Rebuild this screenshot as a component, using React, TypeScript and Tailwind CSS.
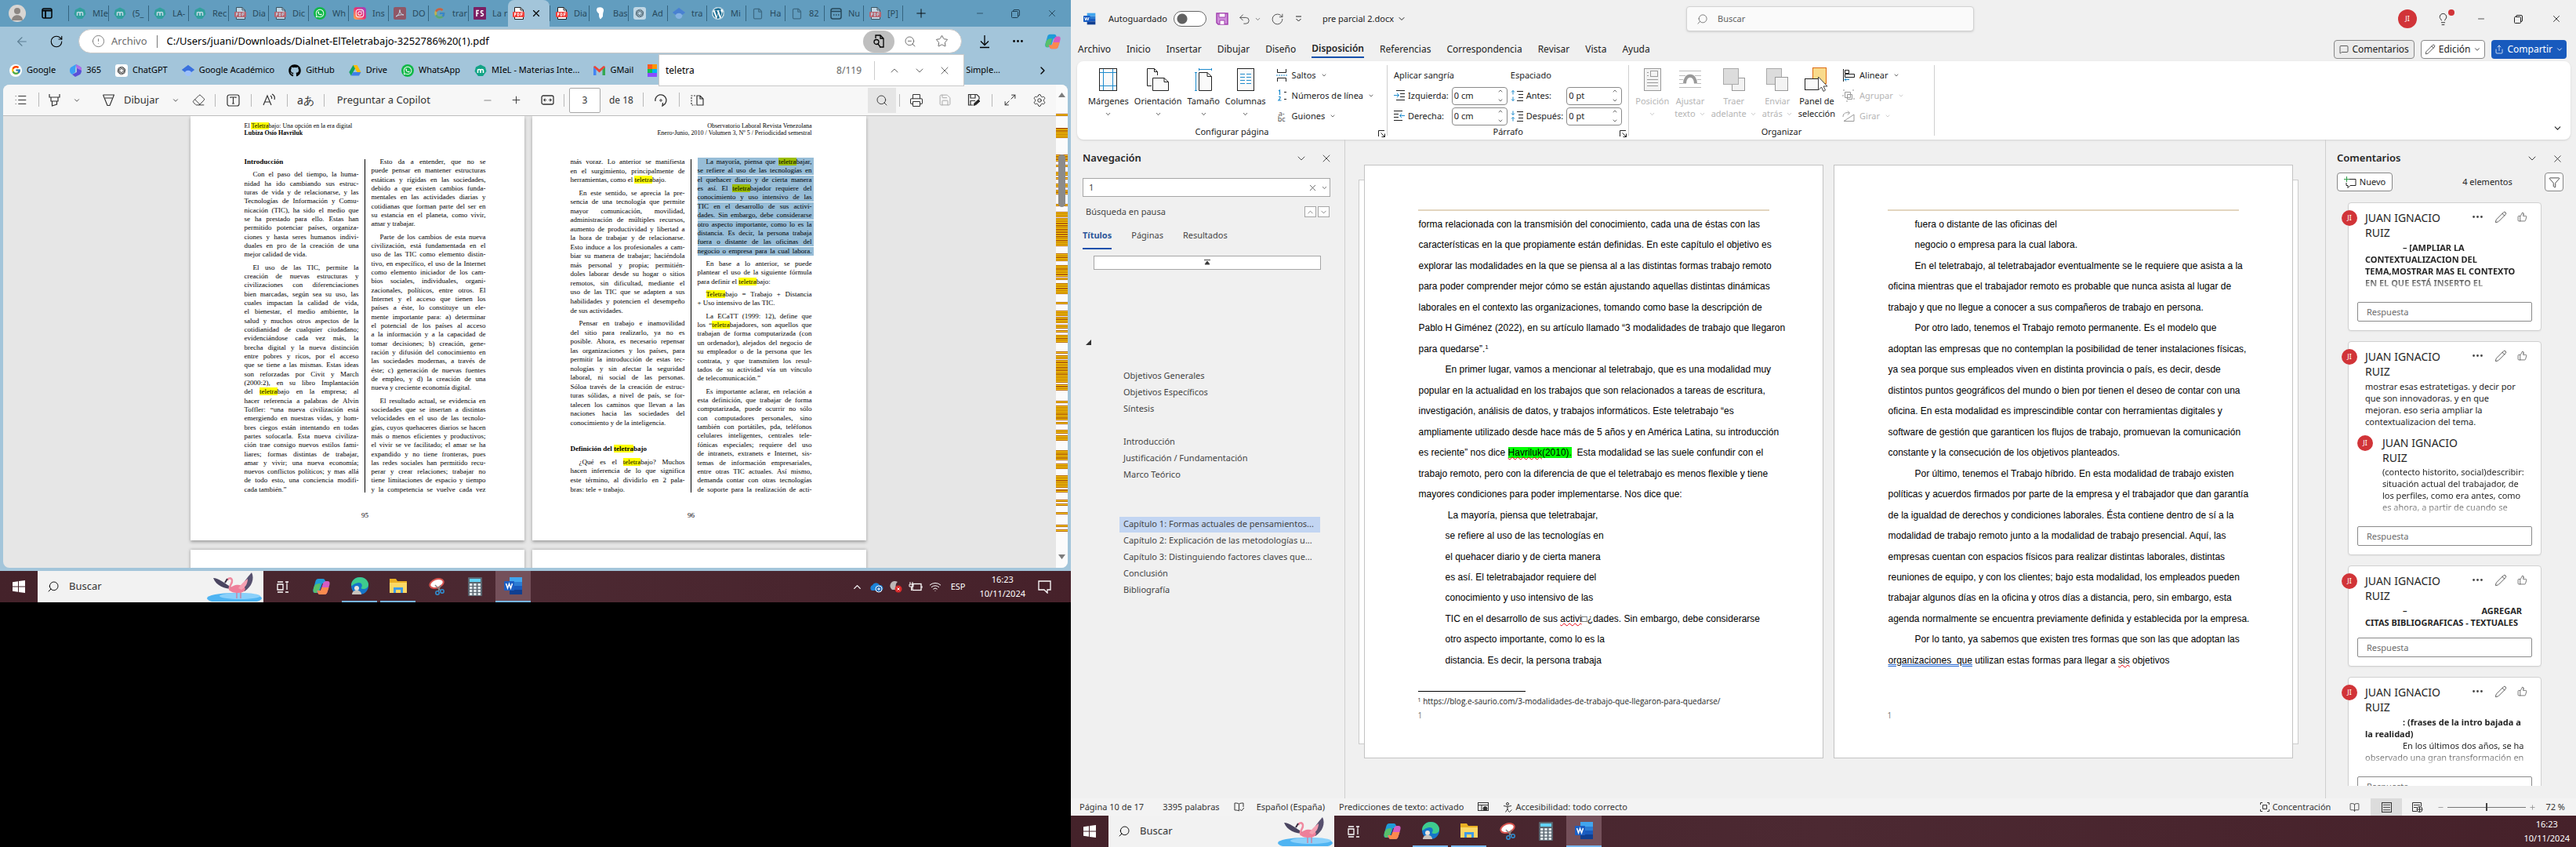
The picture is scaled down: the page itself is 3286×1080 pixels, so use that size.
import type { ReactNode } from 'react';
import {
  AlignJustify, ArrowLeft, BookOpen, ChevronDown, ChevronRight, ChevronUp, Download, Eraser, File, Filter, Info,
  Lightbulb, List, Maximize2, MessageSquare, Minus, MoreHorizontal, Pencil, Plus, Printer, RotateCw, Save, Search,
  Settings, Share, Star, ThumbsUp, Undo2, Wifi, X, ZoomOut,
} from 'lucide-react';
import { FcGoogle } from 'react-icons/fc';
import { FaGithub, FaInstagram, FaWhatsapp, FaWordpress } from 'react-icons/fa';

const ui = "font-['Noto_Sans',sans-serif]";

/* ---------- small drawings ---------- */

function Svg({ w = 16, h = 16, box, className = '', children }: { w?: number; h?: number; box?: string; className?: string; children: ReactNode }) {
  return (
    <svg width={w} height={h} viewBox={box ?? `0 0 ${w} ${h}`} fill="none" stroke="currentColor" className={`shrink-0 ${className}`} aria-hidden="true">
      {children}
    </svg>
  );
}

const Restore = ({ size = 11 }: { size?: number }) => (
  <Svg w={size} h={size} box="0 0 11 11">
    <rect x="0.5" y="2.5" width="8" height="8" rx="1" />
    <path d="M2.5 2.5V2a1.5 1.5 0 0 1 1.500-1.500H9A1.500 1.500 0 0 1 10.500 2v5A1.500 1.500 0 0 1 9 8.500" />
  </Svg>
);

const Miel = () => (
  <Svg w={16} h={16}>
    <path d="M8 0.500 14 3.500 15.500 9 11 15H5L0.500 9 2 3.500z" fill="#12a385" stroke="none" />
    <path d="M4.500 11V6.500M4.500 8c0-2 3.500-2 3.500 0v3M8 8c0-2 3.500-2 3.500 0v3" stroke="#fff" strokeWidth="1.600" />
  </Svg>
);
const Pdf = () => (
  <Svg w={15} h={16}>
    <path d="M2.500 0.500H10L13.500 4v11.500h-11z" fill="#fff" stroke="#222" />
    <path d="M10 0.500V4h3.500" stroke="#222" />
    <rect x="0" y="6" width="15" height="7" rx="1" fill="#f0413c" stroke="none" />
    <path d="M2.500 11.500v-4h1.500v2h-1.500M6.500 7.500v4c2.500 0 2.500-4 0-4M10.500 11.500v-4h2.500M10.500 9.500h2" stroke="#fff" strokeWidth="0.900" />
  </Svg>
);
const Acrobat = () => (
  <Svg w={16} h={16}>
    <rect width="16" height="16" rx="2" fill="#b0292c" stroke="none" />
    <path d="M3 12c3-1 5-5 5-8.500 0 4 2 6 5 6.500-4-0.500-6.500 0-10 2z" stroke="#fff" />
  </Svg>
);
const Fs = () => (
  <Svg w={16} h={16}>
    <rect width="16" height="16" rx="1" fill="#7b1f63" stroke="none" />
    <path d="M4 12V4.500h3M4 8h2.500M12.500 5C9 3.500 8.500 7.500 11 8s2 4-2 3" stroke="#fff" strokeWidth="1.500" />
  </Svg>
);
const Gpt = () => (
  <Svg w={16} h={16}>
    <rect width="16" height="16" rx="3" fill="#fff" stroke="none" />
    {[0, 60, 120, 180, 240, 300].map((a) => (
      <path key={a} d="M6 8V4.500L8.500 3l2.500 1.500V7" stroke="#333" strokeWidth="0.800" transform={`rotate(${a} 8 8)`} />
    ))}
  </Svg>
);
const Scholar = () => (
  <Svg w={16} h={16}>
    <path d="M8 1 16 7l-8 6-8-6z" fill="#4a84ee" stroke="none" />
    <circle cx="8" cy="10.500" r="4.500" fill="#9cc0fa" stroke="none" />
    <path d="M8 1 0 7l4 3c1.500-3 6.500-3 8 0l4-3z" fill="#3a70dd" stroke="none" />
  </Svg>
);
const Drive = () => (
  <Svg w={16} h={15} box="0 0 16 15">
    <path d="M5.500 1h5l5 9h-5z" fill="#fbbc05" stroke="none" />
    <path d="M5.500 1 8 5.500 2.800 14.500 0.300 10z" fill="#10a35a" stroke="none" />
    <path d="M5.400 10h10.100l-2.500 4.500H2.800z" fill="#3f7fe8" stroke="none" />
  </Svg>
);
const Gmail = () => (
  <Svg w={15} h={12}>
    <path d="M0 12V1.500L3.500 4.500V12z" fill="#4285f4" stroke="none" />
    <path d="M15 12V1.500L11.500 4.500V12z" fill="#34a853" stroke="none" />
    <path d="M0 1.500C1-0.500 3 0.500 3.500 1.200L7.500 4.500l4-3.300C12 0.500 14-0.500 15 1.500L7.500 8.500z" fill="#ea4335" stroke="none" />
  </Svg>
);
const Copilot = ({ size = 20 }: { size?: number }) => (
  <Svg w={size} h={size} box="0 0 24 24">
    <path d="M8 2h6c2 0 2.500 1.500 3 3l1 3h-5l-3 9c-0.800 2-2 3-4 3H4c-3 0-3-3-2-6L4.500 5C5 3 6.500 2 8 2z" fill="#1f9bd8" stroke="none" />
    <path d="M2 14c1-4 3-6 9-6l-2 9c-0.800 2-2 3-4 3-3 0-4-2-3-6z" fill="#57c06a" stroke="none" />
    <path d="M16 22h-6c-2 0-2.500-1.500-3-3l-1-2h5l3-9c0.800-2 2-3 4-3h2c3 0 3 3 2 6l-2.500 8c-0.500 2-2 3-3.500 3z" fill="#d45cc4" stroke="none" />
    <path d="M7 17h4l1.500-4h9l-2 6c-0.500 2-2 3-3.500 3h-6c-2 0-2.500-1.500-3-5z" fill="#fb8a4e" stroke="none" />
  </Svg>
);
const M365 = () => (
  <Svg w={15} h={16}>
    <path d="M8 0 2 3.500C0.500 4.500 0 6 0 8s1 4 3 5l4-3V6z" fill="#3aa0f5" stroke="none" />
    <path d="M8 0l6 3.500c1 1 1 2 1 4.500s-1 4-2 5l-6 3-4-3 6-3V5z" fill="#5a4fd8" stroke="none" />
    <path d="M8 0l6 3.500c1 1 1 2 1 4.500L9 5z" fill="#b46ee8" stroke="none" />
  </Svg>
);
const WordLogo = ({ size = 16 }: { size?: number }) => (
  <Svg w={size} h={size} box="0 0 24 24">
    <path d="M7 1h16v6H7z" fill="#41a5ee" stroke="none" />
    <path d="M7 7h16v5H7z" fill="#2b7cd3" stroke="none" />
    <path d="M7 12h16v5H7z" fill="#185abd" stroke="none" />
    <path d="M7 17h16v6H7z" fill="#103f91" stroke="none" />
    <rect x="0" y="6" width="13" height="12" rx="1" fill="#1b5fc4" stroke="none" />
    <path d="M2.500 9 4.500 15 6.500 9.500 8.500 15 10.500 9" stroke="#fff" strokeWidth="1.500" />
  </Svg>
);
const Whats = () => (
  <span className="grid size-4 shrink-0 place-items-center rounded-full bg-[#12b849] text-white"><FaWhatsapp size={12} /></span>
);
const Insta = () => (
  <span className="grid size-4 shrink-0 place-items-center rounded bg-linear-to-tr from-[#fdb13c] via-[#e8306f] to-[#9b36c8] text-white"><FaInstagram size={12} /></span>
);

/* ---------- browser window ---------- */

type Tab = { icon: ReactNode; text: string; dim?: boolean };
const tabsBefore: Tab[] = [
  { icon: <Miel />, text: 'MIe', dim: true }, { icon: <Miel />, text: '(5_', dim: true }, { icon: <Miel />, text: 'LA-', dim: true },
  { icon: <Miel />, text: 'Rec', dim: true }, { icon: <Pdf />, text: 'Dia', dim: true }, { icon: <Pdf />, text: 'Dic', dim: true },
  { icon: <Whats />, text: 'Wh' }, { icon: <Insta />, text: 'Ins' }, { icon: <Acrobat />, text: 'DO', dim: true },
  { icon: <FcGoogle size={16} className="shrink-0" />, text: 'trar', dim: true }, { icon: <Fs />, text: 'La r' },
];
const tabsAfter: Tab[] = [
  { icon: <Pdf />, text: 'Dia' },
  { icon: <Svg w={12} h={16}><path d="M2 1c4-2 9 0 8 4-1 3-1 4-1 7l-3 3.500c-2-2-2-4-2-7C1 6 0 3 2 1z" fill="#fff" stroke="none" /></Svg>, text: 'Bas' },
  { icon: <Gpt />, text: 'Ad', dim: true }, { icon: <Scholar />, text: 'tra', dim: true },
  { icon: <FaWordpress size={16} className="shrink-0 rounded-full bg-white text-[#1d6e93]" />, text: 'Mi' },
  { icon: <File size={15} className="shrink-0" />, text: 'Ha', dim: true }, { icon: <File size={15} className="shrink-0" />, text: '82', dim: true },
  { icon: <Svg w={15} h={15}><rect x="1" y="1" width="13" height="13" rx="2.500" strokeWidth="1.500" /><path d="M1 4.500h13M4 9h1.500M7 9h1.500M10 9h1.500" strokeWidth="1.500" /></Svg>, text: 'Nu' },
  { icon: <Pdf />, text: '[P]', dim: true },
];

function TabButton({ tab, narrow }: { tab: Tab; narrow?: boolean }) {
  return (
    <button className={`flex h-5 items-center gap-2 overflow-hidden border-l border-[#35647f] pl-1.5 text-[11px] whitespace-nowrap text-[#27495c] ${narrow ? 'w-[50px]' : 'w-[51px]'}`}>
      <span className={`flex w-4 shrink-0 justify-center ${tab.dim ? 'opacity-60' : ''}`}>{tab.icon}</span>
      {tab.text}
    </button>
  );
}

function TabStrip() {
  return (
    <div className="flex h-[34px] shrink-0 items-center bg-[#629dbf]">
      <button aria-label="Perfil" className="ml-[11px] grid size-[22px] place-items-center overflow-hidden rounded-full bg-[#d8d5d2]">
        <Svg w={22} h={22}><circle cx="11" cy="8" r="4" fill="#8b8682" stroke="none" /><path d="M4 20c0-9 14-9 14 0z" fill="#8b8682" stroke="none" /></Svg>
      </button>
      <button aria-label="Áreas de trabajo" className="mr-5 ml-5 text-black">
        <Svg w={14} h={14}><rect x="1" y="1" width="12" height="12" rx="2" strokeWidth="1.500" /><path d="M1 3.500h12M5 4v9" strokeWidth="2" /></Svg>
      </button>
      {tabsBefore.map((t, i) => <TabButton key={i} tab={t} />)}
      <button aria-label="Pestaña activa" className="flex h-full w-[53px] items-center justify-between self-end rounded-t-lg bg-[#a3c5da] pr-2.5 pl-1.5">
        <Pdf /><X size={14} />
      </button>
      {tabsAfter.map((t, i) => <TabButton key={i} tab={t} narrow />)}
      <div className="h-5 border-l border-[#35647f]" />
      <button aria-label="Nueva pestaña" className="ml-3.5"><Plus size={18} strokeWidth={1.2} /></button>
      <div className="mr-[17px] ml-auto flex items-center gap-[34px] text-[#1f3f52]">
        <button aria-label="Minimizar"><Minus size={12} strokeWidth={1.5} /></button>
        <button aria-label="Restaurar"><Restore /></button>
        <button aria-label="Cerrar"><X size={14} strokeWidth={1.5} /></button>
      </div>
    </div>
  );
}

function AddressBar() {
  return (
    <div className="flex h-[37px] shrink-0 items-center">
      <button aria-label="Atrás" className="ml-[19px] text-[#5d7f93]"><ArrowLeft size={18} strokeWidth={1.5} /></button>
      <button aria-label="Actualizar" className="mr-[19px] ml-[26px]"><RotateCw size={18} strokeWidth={1.5} /></button>
      <div className="flex h-[31px] flex-1 items-center rounded-full border border-[#c9c9c9] bg-white pl-4 text-[13px]">
        <Info size={17} strokeWidth={1.2} className="rotate-180 text-[#6b6b6b]" />
        <span className="ml-2 text-[#6b6b6b]">Archivo</span>
        <span className="mx-3 h-4 border-l border-[#777]" />
        <input aria-label="Dirección" readOnly className="min-w-0 flex-1 outline-none" value="C:/Users/juani/Downloads/Dialnet-ElTeletrabajo-3252786%20(1).pdf" />
        <button aria-label="Buscar en la página" className="grid h-7 w-10 place-items-center rounded-full bg-[#bfbfbf]">
          <Svg w={16} h={17}><path d="M4 5V1h6l4 4v11H9M10 1v4h4" strokeWidth="1.300" /><circle cx="5" cy="9.500" r="3" strokeWidth="1.300" /><path d="m7 12 3 4" strokeWidth="1.300" /></Svg>
        </button>
        <button aria-label="Alejar" className="ml-3 text-[#666]"><ZoomOut size={16} strokeWidth={1.4} /></button>
        <button aria-label="Favoritos" className="mr-4 ml-6 text-[#666]"><Star size={17} strokeWidth={1.4} /></button>
      </div>
      <div className="mr-3 ml-5 flex items-center gap-[25px]">
        <button aria-label="Descargas"><Svg w={18} h={18}><path d="M9 1v12M4 8.500l5 5 5-5M3 16.500h12" strokeWidth="1.300" /></Svg></button>
        <button aria-label="Más"><MoreHorizontal size={17} /></button>
        <button aria-label="Copilot"><Copilot size={22} /></button>
      </div>
    </div>
  );
}

const marks: [ReactNode, string][] = [
  [<span key="g" className="grid size-4 place-items-center rounded-full bg-white"><FcGoogle size={13} /></span>, 'Google'], [<M365 key="m" />, '365'], [<Gpt key="c" />, 'ChatGPT'],
  [<Scholar key="s" />, 'Google Académico'], [<FaGithub key="h" size={16} />, 'GitHub'], [<Drive key="d" />, 'Drive'],
  [<Whats key="w" />, 'WhatsApp'], [<Miel key="mi" />, 'MIeL - Materias Inte...'], [<Gmail key="gm" />, 'GMail'],
];

function Bookmarks() {
  return (
    <div className="relative flex h-[37px] shrink-0 items-center pl-3 text-[11px] whitespace-nowrap">
      <nav aria-label="Marcadores" className="flex items-center gap-[18px]">
        {marks.map(([icon, text]) => (
          <a key={text} href="#" className="flex items-center gap-1.5">{icon}{text}</a>
        ))}
        <Svg w={12} h={16}>
          <path d="M0 0h6v6H0z" fill="#ff5a1f" stroke="none" /><path d="M6 0h6v6H6z" fill="#ff9500" stroke="none" />
          <path d="M0 6h6v5H0z" fill="#12c24a" stroke="none" /><path d="M6 6h6v5H6z" fill="#00b4f0" stroke="none" />
          <path d="M0 11h12v5H0z" fill="#8a4cff" stroke="none" />
        </Svg>
      </nav>
      <a href="#" className="mr-[90px] ml-auto">Simple...</a>
      <button aria-label="Más marcadores" className="absolute right-7"><ChevronRight size={16} /></button>
      <div role="search" className="absolute -top-0.5 right-[136px] z-10 flex h-[41px] w-[390px] items-center border border-[#c8c8c8] bg-white px-2 text-xs">
        <input aria-label="Buscar" readOnly value="teletra" className="min-w-0 flex-1 outline-none" />
        <span className="text-[#666]">8/119</span>
        <span className="mr-[17px] ml-4 h-6 border-l border-[#ccc]" />
        <div className="mr-2 flex gap-4 text-[#555]">
          <button aria-label="Anterior"><ChevronUp size={16} strokeWidth={1.3} /></button>
          <button aria-label="Siguiente"><ChevronDown size={16} strokeWidth={1.3} /></button>
          <button aria-label="Cerrar búsqueda"><X size={16} strokeWidth={1.3} /></button>
        </div>
      </div>
    </div>
  );
}

const Sep = () => <span className="h-4 border-l border-[#b9b9b9]" />;

function PdfToolbar() {
  return (
    <div className="flex h-10 shrink-0 items-center border-b border-[#bdbdbd] bg-[#f7f7f7] text-[13px] text-[#333]">
      <div className="flex items-center pl-3.5">
        <button aria-label="Contenido"><List size={17} strokeWidth={1.4} /></button>
        <span className="ml-3.5"><Sep /></span>
        <button aria-label="Resaltar" className="ml-3 flex items-center gap-4">
          <Svg w={15} h={17}><path d="M1 1v4h13V1M3 5v5h9V5M4.500 10v6l6-2v-4" strokeWidth="1.200" /></Svg><ChevronDown size={10} />
        </button>
        <button className="ml-7 flex items-center gap-3"><Svg w={15} h={16}><path d="M0.500 1h14L9 14.500H6L0.500 1M3 5h9" strokeWidth="1.200" /></Svg>Dibujar<ChevronDown size={10} className="ml-1" /></button>
        <button aria-label="Borrar" className="mr-3 ml-4"><Eraser size={17} strokeWidth={1.3} /></button>
        <Sep />
        <button aria-label="Agregar texto" className="mx-3.5"><Svg w={17} h={16}><rect x="1" y="1" width="15" height="14" rx="2.500" strokeWidth="1.200" /><path d="M5 5V4h7v1M8.500 4v8M7 12h3" strokeWidth="1.200" /></Svg></button>
        <Sep />
        <button aria-label="Leer en voz alta" className="mx-3.5"><Svg w={17} h={17}><path d="m1 15 5-12 5 12M3 11h6M10 3c1.500 1 2 2 1.500 4M12 1c3 1.500 4 4 3 7" strokeWidth="1.200" /></Svg></button>
        <Sep />
        <button aria-label="Traducir" className="mx-3 text-[14px] leading-none">aあ</button>
        <Sep />
        <button className="ml-4">Preguntar a Copilot</button>
      </div>
      <div className="mr-auto ml-[66px] flex items-center">
        <button aria-label="Alejar" className="text-[#888]"><Minus size={14} /></button>
        <button aria-label="Acercar" className="ml-[22px]"><Plus size={15} strokeWidth={1.5} /></button>
        <button aria-label="Ajustar al ancho" className="mr-3 ml-6"><Svg w={17} h={13}><rect x="1" y="1" width="15" height="11" rx="2" strokeWidth="1.300" /><path d="M4 6.500h3M10 6.500h3M5.500 4.500l-2 2 2 2M11.500 4.500l2 2-2 2" /></Svg></button>
        <Sep />
        <input aria-label="Página" readOnly value="3" className="mr-[11px] ml-1.5 h-8 w-10 rounded-xs border border-[#a9a9a9] bg-white text-center text-xs" />
        <span className="text-xs">de 18</span>
        <span className="mr-3.5 ml-3"><Sep /></span>
        <button aria-label="Girar"><Svg w={17} h={16}><path d="M1 9a7 7 0 1 1 9 5.500M14 12l-4 3 0.500-4" strokeWidth="1.300" /><circle cx="8" cy="8" r="1.200" /></Svg></button>
        <span className="mr-3.5 ml-3.5"><Sep /></span>
        <button aria-label="Vista de página"><Svg w={17} h={14}><path d="M6 1H1v12h5" strokeDasharray="2 1.500" strokeWidth="1.200" /><path d="M8 1h4l4 4v8H8zM12 1v4h4" strokeWidth="1.200" /></Svg></button>
      </div>
      <div className="flex items-center pr-3">
        <button aria-label="Buscar" className="mr-1 grid h-8 w-9 place-items-center bg-[#e5e5e5]"><Search size={16} strokeWidth={1.4} /></button>
        <Sep />
        <button aria-label="Imprimir" className="ml-3"><Printer size={18} strokeWidth={1.4} /></button>
        <button aria-label="Guardar" className="ml-[19px] text-[#aaa]"><Save size={17} strokeWidth={1.4} /></button>
        <button aria-label="Guardar como" className="mr-3.5 ml-5"><Svg w={17} h={17}><path d="M7 15H1.500V1.500H12L15 4.500V8M4 1.500V6h6V1.500M4 15V9.500h6" strokeWidth="1.200" /><path d="m8 15.500 1-3 5-4.500 2 2-5 4.500z" fill="#222" /></Svg></button>
        <Sep />
        <button aria-label="Pantalla completa" className="ml-3.5"><Maximize2 size={17} strokeWidth={1.4} /></button>
        <button aria-label="Configuración" className="ml-5"><Settings size={18} strokeWidth={1.3} /></button>
      </div>
    </div>
  );
}

/* In these columns: "# " marks a heading, "> " the first line of a paragraph, a trailing "|" a line that is not stretched. */
const p95a = `# Introducción|
> Con el paso del tiempo, la huma-
nidad ha ido cambiando sus estruc-
turas de vida y de relacionarse, y las
Tecnologías de Información y Comu-
nicación (TIC), ha sido el medio que
se ha prestado para ello. Estas han
permitido potenciar países, organiza-
ciones y hasta seres humanos indivi-
duales en pro de la creación de una
mejor calidad de vida.|
> El uso de las TIC, permite la
creación de nuevas estructuras y
civilizaciones con diferenciaciones
bien marcadas, según sea su uso, las
cuales impactan la calidad de vida,
el bienestar, el medio ambiente, la
salud y muchos otros aspectos de la
cotidianidad de cualquier ciudadano;
evidenciándose cada vez más, la
brecha digital y la nueva distinción
entre pobres y ricos, por el acceso
que se tiene a las mismas. Estas ideas
son reforzadas por Civit y March
(2000:2), en su libro Implantación
del teletrabajo en la empresa; al
hacer referencia a palabras de Alvin
Toffler: “una nueva civilización está
emergiendo en nuestras vidas, y hom-
bres ciegos están intentando en todas
partes sofocarla. Esta nueva civiliza-
ción trae consigo nuevos estilos fami-
liares; formas distintas de trabajar,
amar y vivir; una nueva economía;
nuevos conflictos políticos; y mas allá
de todo esto, una conciencia modifi-
cada también.”|`;
const p95b = `> Esto da a entender, que no se
puede pensar en mantener estructuras
estáticas y rígidas en las sociedades,
debido a que existen cambios funda-
mentales en las actividades diarias y
cotidianas que forman parte del ser en
su estancia en el planeta, como vivir,
amar y trabajar.|
> Parte de los cambios de esta nueva
civilización, está fundamentada en el
uso de las TIC como elemento distin-
tivo, en específico, el uso de la Internet
como elemento iniciador de los cam-
bios sociales, individuales, organi-
zacionales, políticos, entre otros. El
Internet y el acceso que tienen los
países a éste, lo constituye un ele-
mente importante para: a) determinar
el potencial de los países al acceso
a la información y a la capacidad de
tomar decisiones; b) creación, gene-
ración y difusión del conocimiento en
las sociedades modernas, a través de
éste; c) generación de nuevas fuentes
de empleo, y d) la creación de una
nueva y creciente economía digital.|
> El resultado actual, se evidencia en
sociedades que se insertan a distintas
velocidades en el uso de las tecnolo-
gías, cuyos quehaceres diarios se hacen
más o menos eficientes y productivos;
el vivir se ve facilitado; el amar se ha
expandido y no tiene fronteras, pues
las redes sociales han permitido recu-
perar y crear relaciones; trabajar no
tiene limitaciones de espacio y tiempo
y la competencia se vuelve cada vez`;
const p96a = `más voraz. Lo anterior se manifiesta
en el surgimiento, principalmente de
herramientas, como el teletrabajo.|
> En este sentido, se aprecia la pre-
sencia de una tecnología que permite
mayor comunicación, movilidad,
administración de múltiples recursos,
aumento de productividad y libertad a
la hora de trabajar y de relacionarse.
Esto induce a los profesionales a cam-
biar su manera de trabajar; haciéndola
más personal y propia; permitién-
doles laborar desde su hogar o sitios
remotos, sin dificultad, mediante el
uso de las TIC que se adapten a sus
habilidades y potencien el desempeño
de sus actividades.|
> Pensar en trabajo e inamovilidad
del sitio para realizarlo, ya no es
posible. Ahora, es necesario repensar
las organizaciones y los países, para
permitir la introducción de estas tec-
nologías y sin afectar la seguridad
laboral, ni social de las personas.
Sóloa través de la creación de estruc-
turas sólidas, a nivel de país, se for-
talecen los caminos que llevan a las
naciones hacia las sociedades del
conocimiento y de la inteligencia.|
# Definición del teletrabajo|
> ¿Qué es el teletrabajo? Muchos
hacen inferencia de lo que significa
este término, al dividirlo en 2 pala-
bras: tele + trabajo.|`;
const p96b = `> *La mayoría, piensa que teletrabajar,
*se refiere al uso de las tecnologías en
*el quehacer diario y de cierta manera
*es así. El teletrabajador requiere del
*conocimiento y uso intensivo de las
*TIC en el desarrollo de sus activi-
*dades. Sin embargo, debe considerarse
*otro aspecto importante, como lo es la
*distancia. Es decir, la persona trabaja
*fuera o distante de las oficinas del
*negocio o empresa para la cual labora.
> En base a lo anterior, se puede
plantear el uso de la siguiente fórmula
para definir el teletrabajo:|
> Teletrabajo = Trabajo + Distancia
+ Uso intensivo de las TIC.|
> La ECaTT (1999: 12), define que
los “teletrabajadores, son aquellos que
trabajan de forma computarizada (con
un ordenador), alejados del negocio de
su empleador o de la persona que les
contrata, y que transmiten los resul-
tados de su actividad vía un vínculo
de telecomunicación.”|
> Es importante aclarar, en relación a
esta definición, que trabajar de forma
computarizada, puede ocurrir no sólo
con computadores personales, sino
también con portátiles, pda, teléfonos
celulares inteligentes, centrales tele-
fónicas especiales; requiere del uso
de intranets, extranets e Internet, sis-
temas de información empresariales,
entre otras TIC actuales. Así mismo,
demanda contar con otras tecnologías
de soporte para la realización de acti-`;

function Found({ text, dark }: { text: string; dark?: boolean }) {
  return (
    <>
      {text.split(/(teletra)/i).map((part, i) =>
        i % 2 ? <mark key={i} className={`text-inherit ${dark ? 'bg-[#9bbd00]' : 'bg-[#ffff00]'}`}>{part}</mark> : part)}
    </>
  );
}

function Column({ text }: { text: string }) {
  return (
    <div className="flex h-[429px] w-[146px] flex-col justify-between text-[9px] leading-[11px] whitespace-nowrap text-black">
      {text.split('\n').map((raw, i) => {
        const heading = raw.startsWith('# ');
        const first = raw.startsWith('> ');
        const ragged = raw.endsWith('|');
        let t = raw.replace(/^[#>] /, '').replace(/\|$/, '');
        const selected = t.startsWith('*');
        if (selected) t = t.slice(1);
        return (
          <div key={i} className={`${heading ? 'font-bold' : ''} ${heading && i ? 'mt-[22px]' : ''} ${first && i ? 'mt-[5px]' : ''} ${selected ? '-mr-0.5 bg-[#97bdd7] pr-0.5' : ''}`}>
            <div className={`${first ? 'pl-[11px]' : ''} ${ragged ? '' : '[text-align-last:justify]'}`}><Found text={t} dark={selected} /></div>
          </div>
        );
      })}
    </div>
  );
}

function PdfPage({ left, right, number, children, reverse }: { left: string; right: string; number: string; children: ReactNode; reverse?: boolean }) {
  return (
    <article className={`h-[541px] w-[426px] bg-white pt-2 shadow-[0_2px_4px_#0005] ${reverse ? 'pr-[69px] pl-[49px]' : 'pr-[49px] pl-[69px]'}`}>
      <header className={`h-[45px] text-[8px] leading-[9px] ${reverse ? 'text-right' : ''}`}>{children}</header>
      <div className="flex justify-between">
        <Column text={left} />
        <span className="my-0.5 border-l border-black" />
        <Column text={right} />
      </div>
      <footer className="mt-[21px] text-center text-[9px] leading-3">{number}</footer>
    </article>
  );
}

const hits = [18,66,71,77,83,89,95,163,171,178,200,225,230,243,266,271,288,296,340,366,372,378,388,395,401,410,418,424,432,440,447,456,463,470,476,482,515,522,528,535,556,562,570,576,582,592,601,622,628,634,640,646,652,688,719,725,732,742,750,757,770,775,790,806,812,820,826,865,880,886,897,903,909,915,925,933,939,945,951,958,964,970,983,992,998,1042,1057,1063,1070,1076,1082,1088,1094,1104,1118,1145,1150,1165,1171,1177,1218,1224,1232,1238,1246,1266,1272,1278,1307,1313,1320,1326,1332,1338,1345,1358,1362,1395,1409,1440,1485,1502];

function PdfView() {
  return (
    <section aria-label="Documento PDF" className="mx-1 mb-1 flex min-h-0 flex-1 overflow-hidden rounded-lg bg-[#e6e6e6]">
      <div className="flex min-w-0 flex-1 flex-col">
        <PdfToolbar />
        <div className="grid min-h-0 flex-1 grid-cols-[426px_426px] content-start justify-center gap-x-2.5 gap-y-3 overflow-hidden pr-1 font-['Liberation_Serif',serif]">
          <PdfPage left={p95a} right={p95b} number="95">
            <Found text="El Teletrabajo: Una opción en la era digital" /><br /><b>Lubiza Osío Havriluk</b>
          </PdfPage>
          <PdfPage left={p96a} right={p96b} number="96" reverse>
            Observatorio Laboral Revista Venezolana<br />Enero-Junio, 2010 / Volumen 3, Nº 5 / Periodicidad semestral
          </PdfPage>
          <div className="h-10 bg-white shadow-[0_0_4px_#0005]" />
          <div className="h-10 bg-white shadow-[0_0_4px_#0005]" />
        </div>
      </div>
      <div className="w-[15px] bg-[#fbfbfb]">
        <svg width="15" height="616" className="block" aria-hidden="true">
          {hits.map((h, i) => (
            <g key={i}>
              <rect x="0" y={Math.round(h / 2.8) + 31} width="15" height="3" fill="#b5650a" />
              <rect x="0" y={Math.round(h / 2.8) + 32} width="15" height="1" fill="#ffd800" />
            </g>
          ))}
          <path d="M3 16l4.500-6 4.500 6zM3 599l4.500 6 4.500-6z" fill="#7d7d7d" />
          <rect x="3" y="89" width="9" height="67" rx="4.500" fill="#8b8b8b" />
        </svg>
      </div>
    </section>
  );
}

/* ---------- taskbar ---------- */

const Flamingo = () => (
  <Svg w={72} h={38}>
    <ellipse cx="35" cy="34" rx="35" ry="7" fill="#4fb4f2" stroke="none" />
    <ellipse cx="42" cy="31" rx="26" ry="4" fill="#8ad0fa" stroke="none" />
    <path d="M38 22v12M43 22v12" stroke="#e2607c" />
    <path d="M8 8c6 0 14 6 26 14-12 0-22-4-26-14z" fill="#4a4560" stroke="none" />
    <path d="M42 22c4-8 9-14 15-21 4 8 0 18-9 24z" fill="#57506e" stroke="none" />
    <path d="M30 24c-4-5 3-8 2-13-1-4-5-3-6 0" stroke="#f08aa0" strokeWidth="2.500" />
    <path d="m26 9-3 5" stroke="#3b3042" strokeWidth="2" />
    <path d="M29 22c3-5 12-7 18-3 4 3 1 8-7 8-6 0-11-1-11-5z" fill="#ee7f9a" stroke="none" />
    <path d="M40 21c3-5 8-9 12-12 0 6-3 11-8 14z" fill="#f4a0b2" stroke="none" />
  </Svg>
);

function TaskApp({ label, children, open, active }: { label: string; children: ReactNode; open?: boolean; active?: boolean }) {
  return (
    <button aria-label={label} className="h-full w-[49px] px-0.5">
      <span className={`grid h-full place-items-center ${open ? 'border-b-2 border-[#78b6ee]' : ''} ${active ? 'bg-[#74505a]' : ''}`}>{children}</span>
    </button>
  );
}

function Taskbar({ tray }: { tray?: boolean }) {
  return (
    <footer className={`flex h-10 shrink-0 items-center bg-linear-to-r from-[#44222a] via-[#4c2932] to-[#46212a] text-white ${ui}`}>
      <button aria-label="Inicio" className="grid h-full w-12 place-items-center">
        <Svg w={16} h={16}><path d="M0 2.200 7 1.200v6.300H0zM8 1l8-1v7.500H8zM0 8.500h7v6.300l-7-1zM8 8.500h8V16l-8-1z" fill="#fff" stroke="none" /></Svg>
      </button>
      <label className="flex h-full w-72 items-center bg-[#f2f2f2] pl-3 text-black">
        <Search size={16} strokeWidth={1.4} className="-scale-x-100" />
        <input aria-label="Buscar" placeholder="Buscar" className="ml-3 w-0 flex-1 text-[13px] outline-none placeholder:text-[#333]" />
        <Flamingo />
      </label>
      <button aria-label="Vista de tareas" className="grid h-full w-[49px] place-items-center">
        <Svg w={16} h={15}><path d="M1 1h7M1 14h7M1 4h7v7H1zM11 1h4M11 14h4M13 4v7" strokeWidth="1.300" /><path d="M13 1v3" /></Svg>
      </button>
      <TaskApp label="Copilot"><Copilot size={24} /></TaskApp>
      <TaskApp label="Microsoft Edge" open>
        <Svg w={24} h={24}>
          <circle cx="12" cy="12" r="11" fill="#1675c9" stroke="none" />
          <path d="M1 12C1 5 6 1 12 1c7 0 11 5 11 9s-3 6-7 6c-2 0-3-1-2-2 2-3 0-6-3-6-6 0-8 4-10 4z" fill="#3ecb8e" stroke="none" />
          <circle cx="8" cy="15" r="3" fill="#e9e4df" stroke="none" /><path d="M2 23c0-7 12-7 12 0z" fill="#c9c3bd" stroke="none" />
        </Svg>
      </TaskApp>
      <TaskApp label="Explorador" open>
        <Svg w={22} h={18}><path d="M0 0h8l2 3h12v15H0z" fill="#eab024" stroke="none" /><path d="M0 5h22v13H0z" fill="#fbd865" stroke="none" /><path d="M5 18v-7h12v7h-3v-4H8v4z" fill="#3f9be8" stroke="none" /></Svg>
      </TaskApp>
      <TaskApp label="Recortes">
        <Svg w={22} h={22}><ellipse cx="11" cy="7" rx="9" ry="5.500" fill="#fff" stroke="#d9544f" strokeWidth="2" transform="rotate(-20 11 7)" /><path d="m9 9 7 7M16 9l-3 8" stroke="#888" strokeWidth="1.500" /><circle cx="18" cy="17" r="2.200" stroke="#2f8fd4" strokeWidth="1.500" /><circle cx="12" cy="19" r="2.200" stroke="#2f8fd4" strokeWidth="1.500" /></Svg>
      </TaskApp>
      <TaskApp label="Calculadora">
        <Svg w={18} h={24}>
          <rect width="18" height="24" rx="1" fill="#5b6670" stroke="none" /><rect x="2" y="2" width="14" height="4" fill="#62d2f5" stroke="none" />
          {[8, 12, 16, 20].map((y) => <path key={y} d={`M2 ${y + 1.5}h3.500M7.200 ${y + 1.5}h3.500M12.500 ${y + 1.5}h3.500`} stroke="#dfe6ea" strokeWidth="3" />)}
        </Svg>
      </TaskApp>
      <TaskApp label="Word" open active><WordLogo size={24} /></TaskApp>
      {tray && (
        <div className="mr-[18px] ml-auto flex items-center gap-2">
          <ChevronUp size={15} />
          <Svg w={18} h={15}><path d="M3 12a4 4 0 0 1 1-7 5 5 0 0 1 9 0 4 4 0 0 1 3 7z" fill="#1c83d8" stroke="none" /><circle cx="12" cy="10" r="4" fill="#1563b0" /><path d="M10 10h4M12 8v4" /></Svg>
          <Svg w={16} h={16}><path d="M3 12a6 6 0 0 1 7-10c-3 2-3 7-1 10z" fill="#bdb6b6" stroke="none" /><circle cx="11" cy="11" r="4.500" fill="#d92c2c" stroke="none" /><path d="m9.500 9.500 3 3M12.500 9.500l-3 3" /></Svg>
          <Svg w={18} h={14}><rect x="5" y="3.500" width="11" height="8" strokeWidth="1.300" /><path d="M17 6v3M2 1v3M5 1v3M1 4h5v3H1zM3.500 7v5" /></Svg>
          <Wifi size={16} strokeWidth={1.5} />
          <span className="ml-1 text-[11px]">ESP</span>
        </div>
      )}
      <time className={`text-center text-[11px] leading-[18px] ${tray ? 'mr-4' : 'mr-2 ml-auto'}`}>16:23<br />10/11/2024</time>
      {tray && <button aria-label="Notificaciones" className="mr-[25px]"><Svg w={17} h={17}><path d="M1 1h15v11h-4v4l-4-4H1z" strokeWidth="1.300" /></Svg></button>}
    </footer>
  );
}

/* ---------- word processor ---------- */

function TitleBar() {
  return (
    <header className="grid h-12 shrink-0 grid-cols-[785fr_367px_768fr] items-center">
      <div className="flex items-center pl-4 text-[11px]">
        <WordLogo />
        <label className="ml-4 flex items-center gap-2">Autoguardado
          <input type="checkbox" role="switch" className="h-5 w-[42px] appearance-none rounded-full border border-[#666] bg-white bg-[radial-gradient(circle_at_10px_9px,#616161_6px,transparent_7px)]" />
        </label>
        <button aria-label="Guardar" className="ml-3 text-[#a13fae]"><Svg w={16} h={16}><path d="M1 1h14v14H3l-2-2z" fill="#cf8fdb" strokeWidth="1.500" /><path d="M4 1h8v5H4zM5 15v-5h6v5" fill="#fff" /></Svg></button>
        <button aria-label="Deshacer" className="ml-3 flex items-center gap-1 text-[#555]"><Undo2 size={17} strokeWidth={1.4} /><ChevronDown size={9} /></button>
        <button aria-label="Repetir" className="ml-3 text-[#555]"><RotateCw size={17} strokeWidth={1.4} /></button>
        <button aria-label="Personalizar" className="ml-3.5"><Svg w={9} h={8}><path d="M1 1h7M1.500 4l3 3 3-3" /></Svg></button>
        <button className="ml-[26px] flex items-center gap-1 text-[11px]">pre parcial 2.docx <ChevronDown size={12} /></button>
      </div>
      <label className="flex h-8 items-center gap-3 rounded-sm border border-[#d2d2d2] bg-[#fafafa] px-3 text-[#666] shadow-sm">
        <Search size={15} strokeWidth={1.3} className="-scale-x-100" />
        <input aria-label="Buscar" placeholder="Buscar" className="flex-1 text-[11px] outline-none placeholder:text-[#616161]" />
      </label>
      <div className="flex items-center justify-end pr-[18px]">
        <span className="grid size-6 place-items-center rounded-full bg-[#d13438] text-[9px] text-white">JI</span>
        <button aria-label="Ideas" className="relative ml-[25px]"><Lightbulb size={17} strokeWidth={1.3} /><span className="absolute -top-1 -right-1.5 size-2 rounded-full bg-[#d13438]" /></button>
        <button aria-label="Minimizar" className="ml-[34px]"><Minus size={12} strokeWidth={1.5} /></button>
        <button aria-label="Restaurar" className="ml-[36px]"><Restore /></button>
        <button aria-label="Cerrar" className="ml-[36px]"><X size={14} strokeWidth={1.5} /></button>
      </div>
    </header>
  );
}

const menu = ['Archivo', 'Inicio', 'Insertar', 'Dibujar', 'Diseño', 'Disposición', 'Referencias', 'Correspondencia', 'Revisar', 'Vista', 'Ayuda'];

function MenuRow() {
  return (
    <div className="flex h-[30px] shrink-0 items-center justify-between pr-3">
      <nav className="flex h-full items-center gap-5 pl-[9px] text-xs">
        {menu.map((m) => (
          <button key={m} className={m === 'Disposición' ? 'border-b-2 border-[#1650ac] pt-0.5 pb-0.5 font-semibold' : ''}>{m}</button>
        ))}
      </nav>
      <div className="flex items-center gap-2 text-xs">
        <button className="flex h-6 items-center gap-1 rounded-sm border border-[#888] bg-[#ebebeb] px-1.5"><MessageSquare size={12} strokeWidth={1.4} />Comentarios</button>
        <button className="flex h-6 items-center gap-1 rounded-sm border border-[#888] bg-white px-1"><Pencil size={14} strokeWidth={1.3} />Edición <ChevronDown size={10} /></button>
        <button className="flex h-6 items-center gap-1 rounded-sm bg-[#185abd] px-1 text-white"><Share size={12} strokeWidth={1.5} />Compartir <ChevronDown size={10} /></button>
      </div>
    </div>
  );
}

function Big({ icon, lines, off, chevron = true }: { icon: ReactNode; lines: string[]; off?: boolean; chevron?: boolean }) {
  return (
    <button disabled={off} className={`flex flex-col items-center leading-4 ${off ? 'text-[#b5b5b5]' : ''}`}>
      <span className="mb-1 flex h-[31px] items-center">{icon}</span>
      <span>{lines[0]}</span>
      <span className="flex h-4 items-center gap-1">{lines[1]}{chevron && <ChevronDown size={9} />}</span>
    </button>
  );
}
function Small({ icon, text, off }: { icon: ReactNode; text: string; off?: boolean }) {
  return <button disabled={off} className={`flex h-[26px] items-center gap-1.5 ${off ? 'text-[#b5b5b5]' : ''}`}>{icon}<span>{text}</span><ChevronDown size={8} /></button>;
}
function Group({ title, children, launcher }: { title: string; children: ReactNode; launcher?: boolean }) {
  return (
    <section className="my-[5px] flex flex-col border-r border-[#cfcfcf]">
      <div className="flex flex-1">{children}</div>
      <div className="relative pb-0.5 text-center leading-[14px]">{title}
        {launcher && <button aria-label={`Opciones de ${title}`} className="absolute right-0.5 bottom-0.5"><Svg w={9} h={9}><path d="M0.500 8V0.500H8M3.500 3.500l5 5M8.500 4.500v4h-4" /></Svg></button>}
      </div>
    </section>
  );
}
function Spin({ icon, label, value }: { icon: ReactNode; label: string; value: string }) {
  return (
    <label className="flex h-[26px] items-center gap-1">
      {icon}<span>{label}</span>
      <span className="ml-auto flex h-[23px] w-[71px] items-center rounded-sm border border-[#8a8a8a] bg-white pr-1 pl-0.5">
        <input readOnly value={value} className="w-0 flex-1 outline-none" />
        <span className="flex flex-col gap-1"><ChevronUp size={8} /><ChevronDown size={8} /></span>
      </span>
    </label>
  );
}
const blue = '#1e8bcd';

function Ribbon() {
  return (
    <section aria-label="Disposición" className="mr-[7px] ml-2 flex h-[100px] shrink-0 rounded-lg bg-white text-[11px] shadow-sm">
      <Group title="Configurar página" launcher>
        <div className="flex gap-[7px] pt-[3px] pr-[13px] pl-3.5">
          <Big lines={['Márgenes']} icon={<Svg w={23} h={29}><rect x="0.500" y="0.500" width="22" height="28" fill="#fafafa" /><path d="M5.500 1v27M17.500 1v27M1 5.500h21M1 22.500h21" stroke={blue} /></Svg>} />
          <Big lines={['Orientación']} icon={<Svg w={28} h={29}><path d="M6 22.500H0.500v-22h9l4 4V9M9.500 0.500v4h4" fill="#fafafa" /><path d="M7.500 28.500v-16H22l5.500 5v11zM22 12.500v5h5.500" fill="#fafafa" /></Svg>} />
          <Big lines={['Tamaño']} icon={<Svg w={22} h={29}><path d="M5.500 28.500v-23H16l5.500 5v18zM16 5.500v5h5.500" fill="#fafafa" /><path d="M5 1.500h16M5.500 0v3M21.500 0v3M1.500 6v22M0 5.500h3M0 28.500h3" stroke={blue} /></Svg>} />
          <Big lines={['Columnas']} icon={<Svg w={22} h={29}><rect x="0.500" y="0.500" width="21" height="28" fill="#fafafa" /><path d="M4 7.500h6M12 7.500h6M4 11.500h6M12 11.500h6M4 15.500h6M12 15.500h6M4 19.500h6M12 19.500h6" stroke={blue} /></Svg>} />
        </div>
        <div className="mr-4">
          <Small text="Saltos" icon={<Svg w={14} h={16}><path d="M1.500 0v4.500h11V0M1.500 16v-4.500h11V16" /><path d="M0 8h14" stroke={blue} strokeDasharray="2 1" /></Svg>} />
          <Small text="Números de línea" icon={<Svg w={14} h={16}><path d="M3 2l1.500-1v6M3 9.500c3-1 3 1 0 4.500h3.500" stroke={blue} strokeWidth="1.200" /><path d="M10 3.500h3M10 12.500h3" /></Svg>} />
          <Small text="Guiones" icon={<span className="w-3.5 text-center text-[9px] leading-[7px] text-[#555]"><span className="block">a-</span>bc</span>} />
        </div>
      </Group>
      <Group title="Párrafo" launcher>
        <div className="pr-1 pl-2">
          <div className="flex h-[26px] items-center">Aplicar sangría</div>
          <Spin label="Izquierda:" value="0 cm" icon={<Svg w={14} h={14}><path d="M3 0.500h11M8 4.500h6M8 8.500h6M3 12.500h11" /><path d="M0 6.500h6M4 4l2.500 2.500L4 9" stroke={blue} /></Svg>} />
          <Spin label="Derecha:" value="0 cm" icon={<Svg w={14} h={14}><path d="M0 0.500h11M0 4.500h6M0 8.500h6M0 12.500h11" /><path d="M14 6.500H8M10 4 7.500 6.500 10 9" stroke={blue} /></Svg>} />
        </div>
        <div className="pr-2">
          <div className="flex h-[26px] items-center">Espaciado</div>
          <Spin label="Antes:" value="0 pt" icon={<Svg w={16} h={14}><path d="M8 1.500h8M10 5.500h6M10 9.500h6M8 13.500h8" /><path d="M3 0.500v5M1 2.500l2-2 2 2M3 13.500v-5M1 11.500l2 2 2-2" stroke={blue} /></Svg>} />
          <Spin label="Después:" value="0 pt" icon={<Svg w={16} h={14}><path d="M8 1.500h8M10 5.500h6M10 9.500h6M8 13.500h8" /><path d="M3 0.500v5M1 3.500l2 2 2-2M3 13.500v-5M1 10.500l2-2 2 2" stroke={blue} /></Svg>} />
        </div>
      </Group>
      <Group title="Organizar">
        <div className="flex gap-[7px] pt-[3px] pr-[9px] pl-2">
          <Big off lines={['Posición']} icon={<Svg w={22} h={29}><rect x="0.500" y="0.500" width="21" height="28" fill="#f3f3f3" stroke="#999" /><rect x="8.500" y="3.500" width="9" height="7" stroke="#999" /><path d="M4 5.500h2M4 9.500h2M4 14.500h14M4 18.500h14M4 22.500h14" stroke="#999" /></Svg>} />
          <Big off lines={['Ajustar', 'texto']} icon={<Svg w={28} h={29}><path d="M0 3.500h28M0 9.500h8M20 9.500h8M0 14.500h5M23 14.500h5M0 19.500h5M23 19.500h5M0 24.500h28" stroke="#bbb" /><path d="M7 19.500c0-13 14-13 14 0" stroke="#999" strokeWidth="4" /></Svg>} />
          <Big off lines={['Traer', 'adelante']} icon={<Svg w={28} h={29}><rect x="11.500" y="12.500" width="16" height="16" fill="#f3f3f3" stroke="#999" /><rect x="0.500" y="0.500" width="19" height="20" fill="#dcdcdc" stroke="#aaa" /></Svg>} />
          <Big off lines={['Enviar', 'atrás']} icon={<Svg w={28} h={29}><rect x="0.500" y="0.500" width="19" height="20" fill="#dcdcdc" stroke="#aaa" /><rect x="11.500" y="11.500" width="16" height="17" fill="#f3f3f3" stroke="#999" /></Svg>} />
          <Big lines={['Panel de', 'selección']} chevron={false} icon={<Svg w={30} h={31}><rect x="10.500" y="0.500" width="17" height="20" fill="#f9da8b" stroke="#dd6b10" /><rect x="0.500" y="14.500" width="17" height="14" fill="#fafafa" /><path d="M17.500 12v17l4-4 2.500 5.500 2.500-1.500-2.500-5h5z" fill="#fff" stroke="#444" /></Svg>} />
        </div>
        <div className="mr-[38px]">
          <Small text="Alinear" icon={<Svg w={16} h={16}><path d="M1.500 0v16M3.500 1.500h5v4h-5zM3.500 6.500h12v4h-12z" /><path d="M9 13.500H3M5 11.500l-2 2 2 2" stroke={blue} /></Svg>} />
          <Small off text="Agrupar" icon={<Svg w={16} h={16}><path d="M3.500 3.500h7v7h-7zM6.500 6.500h6v6h-6z" stroke="#999" /><path d="M1 1h14v14H1z" stroke="#999" strokeDasharray="2 10" /></Svg>} />
          <Small off text="Girar" icon={<Svg w={16} h={14}><path d="M2 13.500h13V5zM1 8C1 3 5 2 9 3M7 0.500 9.500 3 7 5.500" stroke="#999" /></Svg>} />
        </div>
      </Group>
      <button aria-label="Contraer la cinta" className="mr-2.5 mb-2 ml-auto self-end"><ChevronDown size={13} /></button>
    </section>
  );
}

const outline = ['', 'Objetivos Generales', 'Objetivos Específicos', 'Síntesis', '', 'Introducción', 'Justificación / Fundamentación', 'Marco Teórico', '', '',
  'Capítulo 1: Formas actuales de pensamientos...', 'Capítulo 2: Explicación de las metodologías u...', 'Capítulo 3: Distinguiendo factores claves que...', 'Conclusión', 'Bibliografía'];

function NavPane() {
  return (
    <aside className="w-[350px] shrink-0 border-r border-[#cfcfcf] px-[15px] pt-3 text-[11px] text-[#444]">
      <div className="flex h-6 items-center">
        <h2 className="text-[13px] font-semibold text-[#262626]">Navegación</h2>
        <button aria-label="Opciones" className="ml-auto"><ChevronDown size={16} strokeWidth={1.4} /></button>
        <button aria-label="Cerrar" className="ml-4"><X size={16} strokeWidth={1.4} /></button>
      </div>
      <div className="mt-[13px] mr-[3px] flex h-6 items-center gap-1 border border-[#a6a6a6] bg-white pr-0.5 pl-[7px]">
        <input aria-label="Buscar en el documento" readOnly value="1" className="w-0 flex-1 outline-none" />
        <button aria-label="Borrar"><X size={13} strokeWidth={1.4} /></button><ChevronDown size={9} />
      </div>
      <div className="mt-2.5 mr-1 flex h-[18px] items-center pl-1">Búsqueda en pausa
        <button aria-label="Anterior" className="ml-auto grid h-3.5 w-[15px] place-items-center border border-[#a6a6a6] bg-white"><ChevronUp size={11} strokeWidth={1.4} /></button>
        <button aria-label="Siguiente" className="ml-0.5 grid h-3.5 w-[15px] place-items-center border border-[#a6a6a6] bg-white"><ChevronDown size={11} strokeWidth={1.4} /></button>
      </div>
      <div role="tablist" className="mt-[13px] flex gap-[25px]">
        <button role="tab" aria-selected="true" className="h-[26px] border-b-2 border-[#1650ac] pb-2 font-bold text-[#2b579a]">Títulos</button>
        <button role="tab" className="pb-2.5">Páginas</button>
        <button role="tab" className="pb-2.5">Resultados</button>
      </div>
      <button aria-label="Ir al inicio" className="mt-[7px] mr-[15px] ml-3.5 flex h-[18px] w-[290px] items-center justify-center border border-[#a6a6a6] bg-white">
        <Svg w={8} h={7}><path d="M0 0.500h8" /><path d="M1 6l3-4 3 4z" fill="#333" /></Svg>
      </button>
      <Svg w={8} h={8} className="mt-[89px] ml-1"><path d="M7 0v7H0z" fill="#333" stroke="none" /></Svg>
      <ul className="mt-2">
        {outline.map((o, i) => (
          <li key={i} className="h-[21px]">
            {o && <button className={`ml-[47px] h-5 w-64 pl-[5px] text-left whitespace-nowrap ${i === 10 ? 'bg-[#c2d5f2]' : ''}`}>{o}</button>}
          </li>
        ))}
      </ul>
    </aside>
  );
}

const wavy = 'underline decoration-red-600 decoration-wavy decoration-1 underline-offset-1';
/* [text, indent] with indent 0 for the margin and 1 for a tab stop */
const docLeft: [ReactNode, number][] = [
  ['forma relacionada con la transmisión del conocimiento, cada una de éstas con las', 0],
  ['características en la que propiamente están definidas. En este capítulo el objetivo es', 0],
  ['explorar las modalidades en la que se piensa al a las distintas formas trabajo remoto', 0],
  ['para poder comprender mejor cómo se están ajustando aquellas distintas dinámicas', 0],
  ['laborales en el contexto las organizaciones, tomando como base la descripción de', 0],
  ['Pablo H Giménez (2022), en su artículo llamado “3 modalidades de trabajo que llegaron', 0],
  [<>para quedarse”.<sup className="text-[8px]">1</sup></>, 0],
  ['En primer lugar, vamos a mencionar al teletrabajo, que es una modalidad muy', 1],
  ['popular en la actualidad en los trabajos que son relacionados a tareas de escritura,', 0],
  ['investigación, análisis de datos, y trabajos informáticos. Este teletrabajo “es', 0],
  ['ampliamente utilizado desde hace más de 5 años y en América Latina, su introducción', 0],
  [<>es reciente” nos dice <mark className="bg-[#00ff00]"><span className={wavy}>Havriluk</span>(2010).</mark>&nbsp; Esta modalidad se las suele confundir con el</>, 0],
  ['trabajo remoto, pero con la diferencia de que el teletrabajo es menos flexible y tiene', 0],
  ['mayores condiciones para poder implementarse. Nos dice que:', 0],
  [<>&nbsp;La mayoría, piensa que teletrabajar,</>, 1],
  ['se refiere al uso de las tecnologías en', 1],
  ['el quehacer diario y de cierta manera', 1],
  ['es así. El teletrabajador requiere del', 1],
  ['conocimiento y uso intensivo de las', 1],
  [<>TIC en el desarrollo de sus <span className={wavy}>activi</span>□¿dades. Sin embargo, debe considerarse</>, 1],
  ['otro aspecto importante, como lo es la', 1],
  ['distancia. Es decir, la persona trabaja', 1],
];
const docRight: [ReactNode, number][] = [
  ['fuera o distante de las oficinas del', 1],
  ['negocio o empresa para la cual labora.', 1],
  ['En el teletrabajo, al teletrabajador eventualmente se le requiere que asista a la', 1],
  ['oficina mientras que el trabajador remoto es probable que nunca asista al lugar de', 0],
  ['trabajo y que no llegue a conocer a sus compañeros de trabajo en persona.', 0],
  ['Por otro lado, tenemos el Trabajo remoto permanente. Es el modelo que', 1],
  ['adoptan las empresas que no contemplan la posibilidad de tener instalaciones físicas,', 0],
  ['ya sea porque sus empleados viven en distinta provincia o país, es decir, desde', 0],
  ['distintos puntos geográficos del mundo o bien por tienen el deseo de contar con una', 0],
  ['oficina. En esta modalidad es imprescindible contar con herramientas digitales y', 0],
  ['software de gestión que garanticen los flujos de trabajo, promuevan la comunicación', 0],
  ['constante y la consecución de los objetivos planteados.', 0],
  ['Por último, tenemos el Trabajo híbrido. En esta modalidad de trabajo existen', 1],
  ['políticas y acuerdos firmados por parte de la empresa y el trabajador que dan garantía', 0],
  ['de la igualdad de derechos y condiciones laborales. Ésta contiene dentro de sí a la', 0],
  ['modalidad de trabajo remoto junto a la modalidad de trabajo presencial. Aquí, las', 0],
  ['empresas cuentan con espacios físicos para realizar distintas laborales, distintas', 0],
  ['reuniones de equipo, y con los clientes; bajo esta modalidad, los empleados pueden', 0],
  ['trabajar algunos días en la oficina y otros días a distancia, pero, sin embargo, esta', 0],
  ['agenda normalmente se encuentra previamente definida y establecida por la empresa.', 0],
  ['Por lo tanto, ya sabemos que existen tres formas que son las que adoptan las', 1],
  [<><span className="underline decoration-[#2b6cd4] decoration-double">organizaciones&nbsp; que</span> utilizan estas formas para llegar a <span className={wavy}>sis</span> objetivos</>, 0],
];

function DocPage({ lines, note, side }: { lines: [ReactNode, number][]; note?: string; side: 'left' | 'right' }) {
  return (
    <div className="relative isolate w-[586px]">
      <div className={`absolute top-[19px] -z-10 h-[720px] w-full border border-[#cccccc] bg-white ${side === 'left' ? '-left-[7px]' : '-right-[7px]'}`} />
      <article className="h-[757px] border border-[#c3c3c3] bg-white px-[68px] pt-14 font-['Liberation_Sans',sans-serif]">
        <div className="border-t-2 border-[#e3d5bf]" />
        <div className="mt-1 flex h-[582px] flex-col justify-between text-xs leading-[26px] whitespace-nowrap text-black">
          {lines.map(([t, indent], i) => <p key={i} className={indent ? 'pl-[35px]' : 'pl-px'}>{t}</p>)}
        </div>
        <div className={`mt-[26px] h-5 w-[137px] ${note ? 'border-t border-black' : ''}`}>
          {note && <p className="pt-1.5 font-['Open_Sans',sans-serif] text-[10px] leading-3 whitespace-nowrap"><sup className="text-[7px]">1</sup> {note}</p>}
        </div>
        <p className="mt-1 font-['Open_Sans',sans-serif] text-[10px] text-[#777]">1</p>
      </article>
    </div>
  );
}

function Avatar() {
  return <span className="grid size-5 shrink-0 place-items-center rounded-full bg-[#d13438] text-[9px] text-white">JI</span>;
}
function Author() {
  return <h3 className="text-sm leading-[19px] text-[#262626]">JUAN IGNACIO<br />RUIZ</h3>;
}
function Comment({ children, reply, fade }: { children: ReactNode; reply?: ReactNode; fade?: boolean }) {
  const mask = '[mask-image:linear-gradient(black_calc(100%-16px),transparent_calc(100%+6px))]';
  return (
    <article className="shrink-0 rounded-sm border border-[#d0d0d0] bg-white pb-[11px] text-[#262626] shadow-xs">
      <div className="flex pt-[9px]">
        <span className="-ml-[9px] shrink-0"><Avatar /></span>
        <div className="ml-2.5 min-w-0 flex-1">
          <div className="flex items-start justify-between pr-[17px]">
            <Author />
            <div className="flex items-center gap-[13px] text-[#444]">
              <button aria-label="Más"><MoreHorizontal size={17} /></button>
              <button aria-label="Editar"><Pencil size={16} strokeWidth={1.3} /></button>
              <button aria-label="Me gusta"><ThumbsUp size={13} strokeWidth={1.3} /></button>
            </div>
          </div>
          <div className={`mt-0.5 text-[11px] leading-[15px] whitespace-nowrap ${fade && !reply ? mask : ''}`}>{children}</div>
        </div>
      </div>
      {reply && (
        <div className="mt-[10px] ml-[11px] flex">
          <Avatar />
          <div className="ml-3"><Author /><div className={`mt-px text-[11px] leading-[15px] whitespace-nowrap ${mask}`}>{reply}</div></div>
        </div>
      )}
      <input aria-label="Respuesta" placeholder="Respuesta" className={`mx-[11px] block h-[25px] w-[223px] rounded-xs border border-[#8a8a8a] bg-white pl-[11px] text-[11px] outline-none placeholder:text-[#6b6b6b] ${fade ? 'mt-[17px]' : 'mt-3'}`} />
    </article>
  );
}

function Comments() {
  return (
    <aside className="flex w-[320px] shrink-0 flex-col overflow-hidden border-l border-[#cfcfcf] pt-3 pr-4 pl-3.5 text-[11px]">
      <div className="flex h-6 shrink-0 items-center">
        <h2 className="text-[13px] font-semibold text-[#262626]">Comentarios</h2>
        <button aria-label="Opciones" className="ml-auto"><ChevronDown size={16} strokeWidth={1.3} /></button>
        <button aria-label="Cerrar" className="ml-[17px]"><X size={15} strokeWidth={1.3} /></button>
      </div>
      <div className="mt-1.5 flex shrink-0 items-center justify-between">
        <button className="flex h-6 w-[71px] items-center justify-center gap-1 rounded-sm border border-[#888] bg-white"><Svg w={16} h={15}><path d="M7 3.500h8v8H8l-3 3v-3H3V8" /><path d="M3.500 0v7M0 3.500h7" stroke="#2e9c48" /></Svg>Nuevo</button>
        <span className="ml-12">4 elementos</span>
        <button aria-label="Filtrar" className="grid h-6 w-6 place-items-center rounded-sm border border-[#888] bg-white"><Filter size={15} strokeWidth={1.3} /></button>
      </div>
      <div className="mt-3.5 mr-7 mb-4 flex min-h-0 flex-1 flex-col gap-[13px] overflow-hidden pl-3.5">
        <Comment fade><b><span className="pl-12">– [AMPLIAR LA</span><br />CONTEXTUALIZACION DEL<br />TEMA,MOSTRAR MAS EL CONTEXTO<br />EN EL QUE ESTÁ INSERTO EL</b></Comment>
        <Comment fade reply={<>(contecto historito, social)describir:<br />situación actual del trabajador, de<br />los perfiles, como era antes, como<br />es ahora, a partir de cuando se</>}>
          mostrar esas estratetigas. y decir por<br />que son innovadoras. y en que<br />mejoran. eso seria ampliar la<br />contextualizacion del tema.
        </Comment>
        <Comment><b><span className="flex justify-between pr-6 pl-12"><span>–</span><span>AGREGAR</span></span>CITAS BIBLIOGRAFICAS - TEXTUALES</b></Comment>
        <Comment fade><b><span className="pl-12">: (frases de la intro bajada a</span><br />la realidad)</b><br /><span className="pl-12">En los últimos dos años, se ha</span><br />observado una gran transformación en</Comment>
      </div>
    </aside>
  );
}

function StatusBar() {
  return (
    <footer className="flex h-[22px] shrink-0 items-center bg-[#f3f3f3] pr-3.5 pl-[11px] text-[11px] whitespace-nowrap text-[#333]">
      <span>Página 10 de 17</span>
      <span className="ml-6">3395 palabras</span>
      <Svg w={13} h={12} className="ml-[18px]"><path d="M6.500 2v9M6.500 2C5 1 3 1 1 1v9c2 0 4 0 5.500 1M6.500 2C8 1 10 1 12 1v5" /><path d="m8 9 1.500 2L13 7" /></Svg>
      <span className="ml-4">Español (España)</span>
      <span className="ml-[18px]">Predicciones de texto: activado</span>
      <Svg w={14} h={12} className="ml-[18px]"><rect x="0.500" y="0.500" width="13" height="10" /><path d="M1 3.500h12M5 3.500v7" /><circle cx="9.500" cy="8" r="2.500" fill="#333" /></Svg>
      <Svg w={12} h={13} className="mr-1 ml-[18px]"><circle cx="6" cy="2" r="1.500" /><path d="M1 4.500l5 1 5-1M6 5.500v3l-2.500 4M6 8.500l1 2" /><path d="m7 11 1.500 1.500 3-3" /></Svg>
      <span>Accesibilidad: todo correcto</span>
      <Svg w={12} h={12} className="mr-1 ml-auto"><path d="M0.500 3V0.500H3M9 0.500h2.500V3M0.500 9v2.500H3M9 11.500h2.500V9M3.500 3.500h5v5h-5z" /></Svg>
      <span>Concentración</span>
      <button aria-label="Modo de lectura" className="ml-6"><BookOpen size={13} strokeWidth={1.5} /></button>
      <button aria-label="Diseño de impresión" className="ml-[14px] grid h-[22px] w-10 place-items-center bg-[#dcdcdc]"><AlignJustify size={13} strokeWidth={1.8} className="border border-[#333]" /></button>
      <button aria-label="Diseño web" className="ml-3"><Svg w={15} h={13}><path d="M7 11.500H1.500v-11h11V5M3 3.500h8M3 6.500h4" /><circle cx="10.500" cy="9" r="3.500" /><path d="M7 9h7M10.500 5.500v7" /></Svg></button>
      <button aria-label="Reducir" className="ml-[18px] text-[#888]"><Minus size={9} /></button>
      <input type="range" aria-label="Zoom" min={10} max={134} defaultValue={72} className="mx-1 h-2.5 w-[100px] appearance-none bg-[linear-gradient(#777,#777)] bg-[length:100%_1px] bg-center bg-no-repeat [&::-webkit-slider-thumb]:h-2.5 [&::-webkit-slider-thumb]:w-0.5 [&::-webkit-slider-thumb]:appearance-none [&::-webkit-slider-thumb]:bg-[#444]" />
      <button aria-label="Ampliar" className="text-[#888]"><Plus size={9} /></button>
      <span className="ml-3">72 %</span>
    </footer>
  );
}

export default function App() {
  return (
    <main className={`grid h-screen grid-cols-[683fr_960fr] grid-rows-[minmax(0,1fr)] overflow-hidden bg-black text-[#222] ${ui}`}>
      <div className="grid min-w-0 grid-rows-[minmax(0,32fr)_minmax(0,13fr)]">
        <section aria-label="Navegador" className="flex min-h-0 flex-col bg-[#a3c5da] text-black">
          <TabStrip />
          <AddressBar />
          <Bookmarks />
          <PdfView />
          <Taskbar tray />
        </section>
      </div>
      <section aria-label="Procesador de textos" className="flex min-h-0 min-w-0 flex-col bg-[#f0f0f0]">
        <TitleBar />
        <MenuRow />
        <Ribbon />
        <div className="flex min-h-0 flex-1">
          <NavPane />
          <div className="flex min-w-0 flex-1 items-start justify-center gap-[13px] overflow-hidden pt-8 pr-[18px]">
            <DocPage side="left" lines={docLeft} note="https://blog.e-saurio.com/3-modalidades-de-trabajo-que-llegaron-para-quedarse/" />
            <DocPage side="right" lines={docRight} />
          </div>
          <Comments />
        </div>
        <StatusBar />
        <Taskbar />
      </section>
    </main>
  );
}
